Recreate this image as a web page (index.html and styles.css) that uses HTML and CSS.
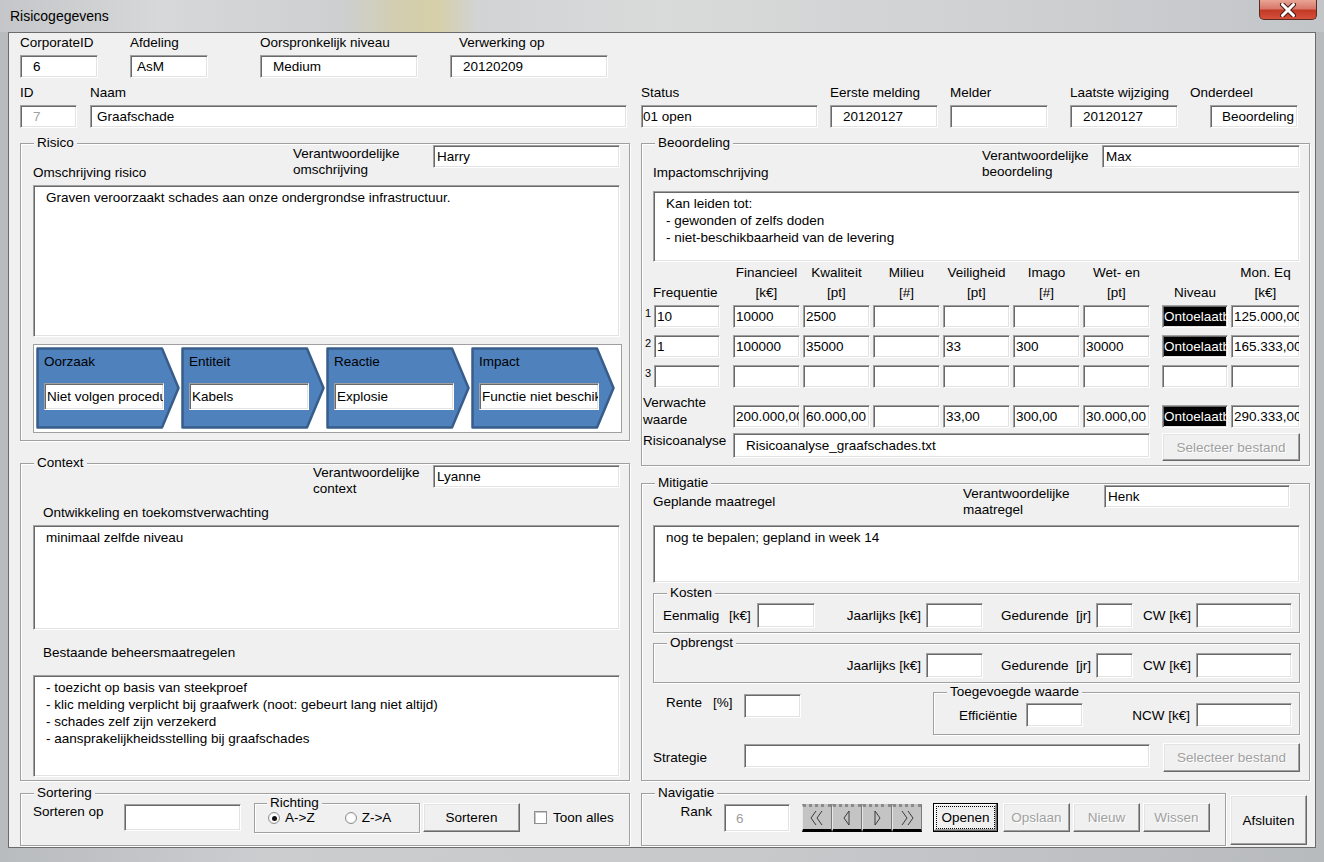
FILE: index.html
```html
<!DOCTYPE html>
<html>
<head>
  <title>Risicogegevens</title>
  <link rel="stylesheet" href="styles.css">
</head>
<body>
<div class="window">
  <div class="titlebar">
    <span class="title">Risicogegevens</span>
    <div class="close">
      <svg width="18" height="14" viewBox="0 0 18 14"><path d="M3.5 1.5 L14.5 12.5 M14.5 1.5 L3.5 12.5" stroke="#4a1a14" stroke-width="5" stroke-linecap="round"/><path d="M3.5 1.5 L14.5 12.5 M14.5 1.5 L3.5 12.5" stroke="#fff" stroke-width="3" stroke-linecap="round"/></svg>
    </div>
  </div>

  <div class="client">
    <!-- Header fields -->
    <div class="hdr">
      <div class="hdr-row">
        <div class="field f-corp"><label>CorporateID</label><input class="tb pl-lg" value="6"></div>
        <div class="field f-afd"><label>Afdeling</label><input class="tb pl-md" value="AsM"></div>
        <div class="field f-niv"><label>Oorspronkelijk niveau</label><input class="tb pl-lg" value="Medium"></div>
        <div class="field f-verw"><label>Verwerking op</label><input class="tb pl-lg" value="20120209"></div>
      </div>
      <div class="hdr-row row2">
        <div class="field f-id"><label>ID</label><input class="tb pl-lg dim" value="7"></div>
        <div class="field f-naam"><label>Naam</label><input class="tb pl-md" value="Graafschade"></div>
        <div class="field f-status"><label>Status</label><input class="tb pl-sm" value="01 open"></div>
        <div class="field f-eerste"><label>Eerste melding</label><input class="tb pl-lg" value="20120127"></div>
        <div class="field f-melder"><label>Melder</label><input class="tb" value=""></div>
        <div class="field f-laatste"><label>Laatste wijziging</label><input class="tb pl-lg" value="20120127"></div>
        <div class="field f-onder"><label>Onderdeel</label><input class="tb right" value="Beoordeling"></div>
      </div>
    </div>

    <div class="main">
      <!-- Left column -->
      <div class="col-left">
        <div class="frame fr-risico">
          <span class="legend">Risico</span>
          <div class="head">
            <span class="caption">Omschrijving risico</span>
            <div class="resp">
              <span class="resp-label w140">Verantwoordelijke<br>omschrijving</span>
              <input class="tb w187" value="Harry">
            </div>
          </div>
          <textarea class="memo m-risico" readonly>Graven veroorzaakt schades aan onze ondergrondse infrastructuur.</textarea>
          <div class="chain">
            <div class="chev">
              <svg viewBox="0 0 144 82" preserveAspectRatio="none"><polygon points="1.5,1.5 126,1.5 142.5,41 126,80.5 1.5,80.5" fill="#4f81bd" stroke="#385d8a" stroke-width="2.5" stroke-linejoin="round"/></svg>
              <div class="chev-label">Oorzaak</div>
              <input class="tb chev-input" value="Niet volgen procedures">
            </div>
            <div class="chev">
              <svg viewBox="0 0 144 82" preserveAspectRatio="none"><polygon points="1.5,1.5 126,1.5 142.5,41 126,80.5 1.5,80.5" fill="#4f81bd" stroke="#385d8a" stroke-width="2.5" stroke-linejoin="round"/></svg>
              <div class="chev-label">Entiteit</div>
              <input class="tb chev-input" value="Kabels">
            </div>
            <div class="chev">
              <svg viewBox="0 0 144 82" preserveAspectRatio="none"><polygon points="1.5,1.5 126,1.5 142.5,41 126,80.5 1.5,80.5" fill="#4f81bd" stroke="#385d8a" stroke-width="2.5" stroke-linejoin="round"/></svg>
              <div class="chev-label">Reactie</div>
              <input class="tb chev-input" value="Explosie">
            </div>
            <div class="chev">
              <svg viewBox="0 0 144 82" preserveAspectRatio="none"><polygon points="1.5,1.5 126,1.5 142.5,41 126,80.5 1.5,80.5" fill="#4f81bd" stroke="#385d8a" stroke-width="2.5" stroke-linejoin="round"/></svg>
              <div class="chev-label">Impact</div>
              <input class="tb chev-input" value="Functie niet beschikbaar">
            </div>
          </div>
        </div>

        <div class="frame fr-context">
          <span class="legend">Context</span>
          <div class="head head-ctx">
            <div class="resp">
              <span class="resp-label w120 pt0">Verantwoordelijke<br>context</span>
              <input class="tb w187" value="Lyanne">
            </div>
          </div>
          <div class="caption cap-ind cap-ontw">Ontwikkeling en toekomstverwachting</div>
          <textarea class="memo m-ontw" readonly>minimaal zelfde niveau</textarea>
          <div class="caption cap-ind cap-best">Bestaande beheersmaatregelen</div>
          <textarea class="memo m-best" readonly>- toezicht op basis van steekproef
- klic melding verplicht bij graafwerk (noot: gebeurt lang niet altijd)
- schades zelf zijn verzekerd
- aansprakelijkheidsstelling bij graafschades</textarea>
        </div>

        <div class="frame fr-sort">
          <span class="legend">Sortering</span>
          <div class="sort-row">
            <span class="sort-label">Sorteren op</span>
            <input class="tb sort-input" value="">
            <div class="frame richting">
              <span class="legend legend-sm">Richting</span>
              <div class="radios">
                <span class="radio on"></span><span class="radio-label">A-&gt;Z</span>
                <span class="radio r2"></span><span class="radio-label">Z-&gt;A</span>
              </div>
            </div>
            <button class="btn btn-sort">Sorteren</button>
            <span class="check"></span><span class="check-label">Toon alles</span>
          </div>
        </div>
      </div>

      <!-- Right column -->
      <div class="col-right">
        <div class="frame fr-beo">
          <span class="legend">Beoordeling</span>
          <div class="head">
            <span class="caption">Impactomschrijving</span>
            <div class="resp">
              <span class="resp-label w120 pt3">Verantwoordelijke<br>beoordeling</span>
              <input class="tb w198" value="Max">
            </div>
          </div>
          <textarea class="memo m-impact" readonly>Kan leiden tot:
- gewonden of zelfs doden
- niet-beschikbaarheid van de levering</textarea>

          <div class="matrix">
            <div class="mrow mhead">
              <div class="mh-freq">Frequentie</div>
              <div></div>
              <div class="mh">Financieel<br>[k€]</div>
              <div class="mh">Kwaliteit<br>[pt]</div>
              <div class="mh">Milieu<br>[#]</div>
              <div class="mh">Veiligheid<br>[pt]</div>
              <div class="mh">Imago<br>[#]</div>
              <div class="mh">Wet- en<br>[pt]</div>
              <div></div>
              <div class="mh"><br>Niveau</div>
              <div class="mh">Mon. Eq<br>[k€]</div>
            </div>
            <div class="mrow r-first">
              <span class="num">1</span>
              <input class="tb" value="10">
              <div></div>
              <input class="tb" value="10000">
              <input class="tb" value="2500">
              <input class="tb" value="">
              <input class="tb" value="">
              <input class="tb" value="">
              <input class="tb" value="">
              <div></div>
              <input class="tb black" value="Ontoelaatbaar">
              <input class="tb" value="125.000,00">
            </div>
            <div class="mrow">
              <span class="num">2</span>
              <input class="tb" value="1">
              <div></div>
              <input class="tb" value="100000">
              <input class="tb" value="35000">
              <input class="tb" value="">
              <input class="tb" value="33">
              <input class="tb" value="300">
              <input class="tb" value="30000">
              <div></div>
              <input class="tb black" value="Ontoelaatbaar">
              <input class="tb" value="165.333,00">
            </div>
            <div class="mrow">
              <span class="num">3</span>
              <input class="tb" value="">
              <div></div>
              <input class="tb" value="">
              <input class="tb" value="">
              <input class="tb" value="">
              <input class="tb" value="">
              <input class="tb" value="">
              <input class="tb" value="">
              <div></div>
              <input class="tb" value="">
              <input class="tb" value="">
            </div>
            <div class="mrow r-exp">
              <span class="exp-label">Verwachte<br>waarde</span>
              <input class="tb" value="200.000,00">
              <input class="tb" value="60.000,00">
              <input class="tb" value="">
              <input class="tb" value="33,00">
              <input class="tb" value="300,00">
              <input class="tb" value="30.000,00">
              <div></div>
              <input class="tb black" value="Ontoelaatbaar">
              <input class="tb" value="290.333,00">
            </div>
          </div>

          <div class="file-row">
            <span class="file-label">Risicoanalyse</span>
            <input class="tb file-input pl-lg" value="Risicoanalyse_graafschades.txt">
            <button class="btn btn-file" disabled>Selecteer bestand</button>
          </div>
        </div>

        <div class="frame fr-mit">
          <span class="legend">Mitigatie</span>
          <div class="head head-mit">
            <span class="caption cap-top">Geplande maatregel</span>
            <div class="resp resp-mit">
              <span class="resp-label w141 pt0">Verantwoordelijke<br>maatregel</span>
              <input class="tb w186" value="Henk">
            </div>
          </div>
          <textarea class="memo m-plan" readonly>nog te bepalen; gepland in week 14</textarea>

          <div class="frame sub">
            <span class="legend">Kosten</span>
            <div class="cost-grid">
              <div class="cell cell-first"><span class="lbl-een">Eenmalig</span><span class="lbl-ke">[k€]</span><input class="tb w58" value=""></div>
              <div class="cell"><span>Jaarlijks [k€]</span><input class="tb w57" value=""></div>
              <div class="cell"><span>Gedurende&nbsp; [jr]</span><input class="tb w37" value=""></div>
              <div class="cell"><span>CW [k€]</span><input class="tb w96" value=""></div>
            </div>
          </div>

          <div class="frame sub sub2">
            <span class="legend">Opbrengst</span>
            <div class="cost-grid">
              <div class="cell cell-first"></div>
              <div class="cell"><span>Jaarlijks [k€]</span><input class="tb w57" value=""></div>
              <div class="cell"><span>Gedurende&nbsp; [jr]</span><input class="tb w37" value=""></div>
              <div class="cell"><span>CW [k€]</span><input class="tb w96" value=""></div>
            </div>
          </div>

          <div class="rente-row">
            <span class="rente-label">Rente</span><span class="rente-unit">[%]</span>
            <input class="tb w57 rente-input" value="">
            <div class="frame toeg">
              <span class="legend">Toegevoegde waarde</span>
              <div class="toeg-row">
                <span class="eff-label">Efficiëntie</span>
                <input class="tb w57 eff-input" value="">
                <span class="ncw-label">NCW [k€]</span>
                <input class="tb w96 eff-input" value="">
              </div>
            </div>
          </div>

          <div class="strat-row">
            <span class="strat-label">Strategie</span>
            <input class="tb strat-input" value="">
            <button class="btn btn-strat" disabled>Selecteer bestand</button>
          </div>
        </div>

        <div class="bottom-row">
          <div class="frame fr-nav">
            <span class="legend">Navigatie</span>
            <div class="nav-row">
              <span class="rank-label">Rank</span>
              <input class="tb rank-input dim" value="6">
              <div class="navbtns">
                <span class="navbtn"><svg width="20" height="18" viewBox="0 0 20 18"><path d="M9 2 L4 9 L9 16 M15 2 L10 9 L15 16" fill="none" stroke="#3c3c3c" stroke-width="1"/></svg></span>
                <span class="navbtn"><svg width="20" height="18" viewBox="0 0 20 18"><path d="M12 2 L7 9 L12 16 Z" fill="none" stroke="#3c3c3c" stroke-width="1"/></svg></span>
                <span class="navbtn"><svg width="20" height="18" viewBox="0 0 20 18"><path d="M8 2 L13 9 L8 16 Z" fill="none" stroke="#3c3c3c" stroke-width="1"/></svg></span>
                <span class="navbtn"><svg width="20" height="18" viewBox="0 0 20 18"><path d="M5 2 L10 9 L5 16 M11 2 L16 9 L11 16" fill="none" stroke="#3c3c3c" stroke-width="1"/></svg></span>
              </div>
              <button class="btn btn-open"><span class="focus">Openen</span></button>
              <button class="btn btn-nav btn-save" disabled>Opslaan</button>
              <button class="btn btn-nav" disabled>Nieuw</button>
              <button class="btn btn-nav" disabled>Wissen</button>
            </div>
          </div>
          <button class="btn btn-close">Afsluiten</button>
        </div>
      </div>
    </div>
  </div>
</div>
</body>
</html>
```

FILE: styles.css
```css
/* Risicogegevens form, VBA user form look */
body {
  margin: 0;
  font-family: "Liberation Sans", Arial, sans-serif;
  font-size: 13.5px;
  color: #000;
}
.window {
  width: 1324px;
  height: 862px;
  overflow: hidden;
  background: linear-gradient(90deg, #b9bcbf, #cbcdcf 20%, #c6c8ca 60%, #b8bbbe);
}
.titlebar {
  height: 32px;
  display: flex;
  align-items: center;
  padding-left: 10px;
  background: linear-gradient(90deg, #c4c6c9 0%, #d7d8d9 12%, #cdcfd0 26%, #d3ceb0 30%, #d6cfa8 33%, #d2d3d4 36%, #d9dada 50%, #cfd1d2 75%, #c3c6c9 100%);
}
.title {
  font-size: 14px;
}
.close {
  margin-left: auto;
  margin-right: 7px;
  align-self: flex-start;
  width: 58px;
  height: 20px;
  box-sizing: border-box;
  border: 1px solid #5b2a23;
  border-top: none;
  border-radius: 0 0 5px 5px;
  background: linear-gradient(#e8a595 0%, #d9786a 45%, #c23a26 55%, #d6503a 100%);
  display: flex;
  align-items: center;
  justify-content: center;
}
.client {
  margin-left: 8px;
  width: 1308px;
  height: 816px;
  box-sizing: border-box;
  border: 1px solid #6b6b6b;
  background: #f0f0f0;
}

/* controls */
.tb {
  box-sizing: border-box;
  height: 23px;
  margin: 0;
  padding: 0 0 0 3px;
  font: inherit;
  color: #000;
  background: #fff;
  border: 1px solid;
  border-color: #a0a0a0 #fff #fff #a0a0a0;
  box-shadow: inset 1px 1px 0 #696969, inset -1px -1px 0 #e3e3e3;
  outline: none;
  min-width: 0;
}
.pl-lg { padding-left: 12px; }
.pl-md { padding-left: 6px; }
.pl-sm { padding-left: 1px; }
.right { text-align: right; padding-right: 3px; }
.dim { color: #a0a0a0; }
.black { background: #000; color: #fff; padding-left: 1px; }
.memo {
  display: block;
  width: 100%;
  box-sizing: border-box;
  margin: 0;
  padding: 3px 12px;
  resize: none;
  overflow: hidden;
  font: inherit;
  line-height: 17px;
  background: #fff;
  border: 1px solid;
  border-color: #a0a0a0 #fff #fff #a0a0a0;
  box-shadow: inset 1px 1px 0 #696969, inset -1px -1px 0 #e3e3e3;
  outline: none;
}
.btn {
  box-sizing: border-box;
  margin: 0;
  padding: 0;
  font: inherit;
  color: #000;
  background: #f0f0f0;
  border: 1px solid;
  border-color: #fff #696969 #696969 #fff;
  box-shadow: inset -1px -1px 0 #a0a0a0, inset 1px 1px 0 #e3e3e3;
}
.btn:disabled {
  color: #a0a0a0;
  text-shadow: 1px 1px 0 #fff;
}
.frame {
  position: relative;
  box-sizing: border-box;
  border: 1px solid #a0a0a0;
  box-shadow: inset 1px 1px 0 #fff, 1px 1px 0 #fff;
}
.legend {
  position: absolute;
  top: -9px;
  left: 13px;
  padding: 0 3px;
  line-height: 16px;
  background: #f0f0f0;
  white-space: nowrap;
}

/* header */
.hdr {
  padding: 2px 0 0 11px;
}
.hdr-row {
  display: flex;
}
.row2 {
  margin-top: 7px;
}
.field {
  display: flex;
  flex-direction: column;
}
.field label {
  display: block;
  height: 16px;
  line-height: 16px;
  margin-bottom: 4px;
  white-space: nowrap;
}
.field .tb { width: 100%; }
.f-corp { width: 78px; }
.f-afd { width: 78px; margin-left: 32px; }
.f-niv { width: 158px; margin-left: 52px; }
.f-verw { width: 158px; margin-left: 32px; }
.f-verw label { padding-left: 9px; }
.f-id { width: 57px; }
.f-naam { width: 537px; margin-left: 13px; }
.f-status { width: 177px; margin-left: 14px; }
.f-eerste { width: 108px; margin-left: 12px; }
.f-melder { width: 98px; margin-left: 12px; }
.f-laatste { width: 108px; margin-left: 22px; }
.f-onder { width: 108px; margin-left: 12px; }
.f-onder .tb { width: 88px; margin-left: 20px; }

/* columns */
.main {
  display: flex;
  gap: 11px;
  padding-left: 11px;
  margin-top: 15px;
}
.col-left { width: 610px; }
.col-right { width: 669px; }

.head {
  display: flex;
  justify-content: space-between;
  height: 36px;
}
.caption {
  align-self: flex-end;
  line-height: 16px;
  white-space: nowrap;
}
.resp { display: flex; }
.resp-label {
  line-height: 16px;
  padding-top: 1px;
  white-space: nowrap;
}
.pt0 { padding-top: 0; }
.pt3 { padding-top: 3px; }
.w120 { width: 120px; }
.w140 { width: 140px; }
.w141 { width: 141px; }
.w186 { width: 186px; }
.w187 { width: 187px; }
.w198 { width: 198px; }
.w96 { width: 96px; }
.w58 { width: 58px; }
.w57 { width: 57px; }
.w37 { width: 37px; }

/* risico */
.fr-risico {
  height: 298px;
  padding: 1px 9px 0 12px;
}
.m-risico {
  margin-top: 4px;
  height: 152px;
}
.chain {
  margin-top: 7px;
  height: 89px;
  box-sizing: border-box;
  display: flex;
  gap: 1px;
  padding: 2px 0 0 2px;
  background: #fff;
  border: 1px solid #a0a0a0;
  width: 589px;
}
.chev {
  position: relative;
  width: 144px;
  height: 82px;
}
.chev svg {
  position: absolute;
  left: 0;
  top: 0;
  width: 144px;
  height: 82px;
}
.chev-label {
  position: relative;
  padding: 7px 0 0 8px;
  line-height: 16px;
}
.chev-input {
  position: relative;
  display: block;
  width: 120px;
  height: 27px;
  margin: 13px 0 0 8px;
  padding-left: 2px;
}

/* context */
.fr-context {
  height: 318px;
  margin-top: 22px;
  padding: 1px 9px 0 12px;
}
.head-ctx {
  height: 32px;
  justify-content: flex-end;
}
.cap-ind { padding-left: 10px; }
.cap-ontw { margin-top: 8px; }
.m-ontw { margin-top: 4px; height: 105px; }
.cap-best { margin-top: 15px; }
.m-best { margin-top: 14px; height: 102px; }

/* sortering */
.fr-sort {
  height: 53px;
  margin-top: 12px;
}
.sort-row {
  display: flex;
  align-items: flex-start;
  padding: 9px 0 0 12px;
}
.sort-label {
  width: 91px;
  margin-top: 1px;
  line-height: 16px;
}
.sort-input {
  width: 117px;
  height: 27px;
  margin-top: 1px;
}
.richting {
  margin-left: 13px;
  width: 166px;
  height: 30px;
}
.legend-sm { left: 12px; }
.radios {
  display: flex;
  align-items: center;
  padding: 7px 0 0 13px;
}
.radio {
  width: 12px;
  height: 12px;
  box-sizing: border-box;
  border-radius: 50%;
  border: 1px solid #8e8f8f;
  background: radial-gradient(circle, #fff 40%, #e6e6e6 100%);
  display: flex;
  align-items: center;
  justify-content: center;
}
.radio.on::after {
  content: "";
  width: 5px;
  height: 5px;
  border-radius: 50%;
  background: #111;
}
.radio-label {
  margin-left: 5px;
  line-height: 14px;
}
.r2 { margin-left: 30px; }
.btn-sort {
  margin-left: 3px;
  width: 97px;
  height: 29px;
}
.check {
  margin: 8px 0 0 14px;
  width: 13px;
  height: 13px;
  box-sizing: border-box;
  background: #fff;
  border: 1px solid #8e8f8f;
  box-shadow: inset 1px 1px 0 #c8c8c8;
}
.check-label {
  margin: 7px 0 0 6px;
  line-height: 16px;
}

/* beoordeling */
.fr-beo {
  height: 323px;
  padding: 1px 9px 0 11px;
}
.m-impact {
  margin-top: 10px;
  height: 71px;
}
.matrix {
  margin-left: -10px;
}
.mrow {
  display: grid;
  grid-template-columns: 8px 66px 7px repeat(6, 67px) 6px 66px 69px;
  column-gap: 3px;
  height: 23px;
  margin-top: 7px;
}
.mrow .tb { width: 100%; padding-left: 2px; }
.mrow .black { padding-left: 1px; }
.mhead {
  height: 40px;
  margin-top: 1px;
  line-height: 20px;
}
.mh {
  text-align: center;
  white-space: nowrap;
}
.mh-freq {
  grid-column: span 2;
  padding: 20px 0 0 10px;
}
.r-first { margin-top: 2px; }
.num {
  font-size: 11px;
  line-height: 12px;
  padding: 2px 0 0 2px;
}
.r-exp { margin-top: 17px; }
.exp-label {
  grid-column: span 3;
  line-height: 17px;
  margin-top: -11px;
  white-space: nowrap;
}
.file-row {
  display: flex;
  align-items: flex-start;
  margin: 5px 0 0 -10px;
}
.file-label {
  width: 90px;
  line-height: 16px;
}
.file-input {
  width: 417px;
  height: 25px;
}
.btn-file {
  margin-left: 12px;
  width: 138px;
  height: 28px;
}

/* mitigatie */
.fr-mit {
  height: 298px;
  margin-top: 17px;
  padding: 0 9px 0 11px;
}
.head-mit { height: 35px; }
.cap-top {
  align-self: flex-start;
  margin-top: 10px;
}
.resp-mit { margin-right: 10px; padding-top: 1px; }
.resp-mit .resp-label { padding-top: 1px; }
.m-plan {
  margin-top: 6px;
  height: 58px;
}
.sub {
  margin-top: 10px;
  height: 40px;
}
.cost-grid {
  display: grid;
  grid-template-columns: 152px 168px 150px 159px;
  padding: 9px 0 0 9px;
}
.cell {
  display: flex;
  justify-content: flex-end;
  align-items: center;
  gap: 5px;
  white-space: nowrap;
}
.cell .tb { height: 25px; }
.cell-first { justify-content: flex-start; gap: 0; }
.lbl-een { width: 66px; }
.lbl-ke { width: 28px; }
.rente-row {
  display: flex;
  align-items: flex-start;
  margin-top: 9px;
}
.rente-label {
  margin: 3px 0 0 13px;
  width: 47px;
  line-height: 16px;
}
.rente-unit {
  margin-top: 3px;
  width: 31px;
  line-height: 16px;
}
.rente-input {
  margin-top: 2px;
  height: 24px;
}
.toeg {
  margin-left: auto;
  width: 367px;
  height: 43px;
}
.toeg-row {
  display: flex;
  align-items: center;
  padding: 10px 7px 0 25px;
}
.eff-label { width: 67px; }
.eff-input { height: 24px; }
.ncw-label {
  margin-left: auto;
  margin-right: 6px;
}
.strat-row {
  display: flex;
  align-items: flex-start;
  margin-top: 8px;
}
.strat-label {
  width: 91px;
  margin-top: 7px;
  line-height: 16px;
}
.strat-input {
  width: 406px;
  height: 24px;
  margin-top: 1px;
}
.btn-strat {
  margin-left: 13px;
  width: 137px;
  height: 29px;
}

/* navigatie */
.bottom-row {
  display: flex;
  align-items: flex-start;
  margin-top: 12px;
}
.fr-nav {
  width: 585px;
  height: 53px;
}
.nav-row {
  display: flex;
  align-items: flex-start;
  padding: 10px 0 0 12px;
}
.rank-label {
  width: 58px;
  text-align: right;
  line-height: 16px;
}
.rank-input {
  margin-left: 12px;
  width: 66px;
  height: 28px;
  padding-left: 11px;
}
.navbtns {
  display: flex;
  margin-left: 12px;
}
.navbtn {
  box-sizing: border-box;
  width: 30px;
  height: 28px;
  display: flex;
  align-items: center;
  justify-content: center;
  background: #c4c4c4;
  border-top: 3px dotted #8a8a8a;
  border-bottom: 3px solid #000;
  border-left: 1px solid #e8e8e8;
  border-right: 1px solid #7a7a7a;
}
.btn-open {
  margin: -1px 0 0 11px;
  width: 65px;
  height: 29px;
  border: 1px solid #000;
  box-shadow: inset -1px -1px 0 #696969, inset 1px 1px 0 #fff, inset -2px -2px 0 #a0a0a0;
  display: flex;
  align-items: center;
  justify-content: center;
}
.focus {
  border: 1px dotted #000;
  padding: 3px 4px;
  line-height: 15px;
}
.btn-nav {
  margin: -1px 0 0 3px;
  width: 67px;
  height: 29px;
}
.btn-save { margin-left: 5px; }
.btn-close {
  margin: 2px 0 0 4px;
  width: 77px;
  height: 50px;
}
```
